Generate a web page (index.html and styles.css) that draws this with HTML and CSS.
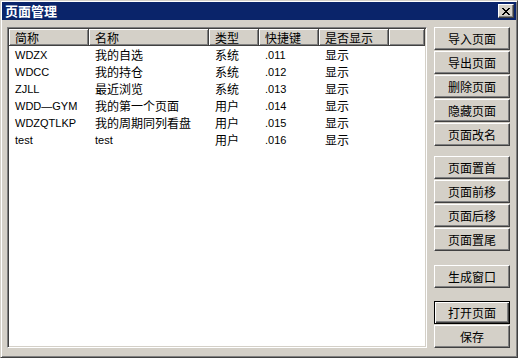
FILE: index.html
```html
<!DOCTYPE html>
<html lang="zh-CN">
<head>
  <meta charset="UTF-8">
  <title>页面管理</title>
  <link rel="stylesheet" href="styles.css">
</head>
<body>

  <div class="window">
    <div class="titlebar">
      <span class="title">页面管理</span>
      <button class="close-btn">
        <svg width="8" height="7" viewBox="0 0 8 7">
          <path d="M0 0h2v1h-2zM6 0h2v1h-2zM1 1h2v1h-2zM5 1h2v1h-2zM2 2h4v1h-4zM3 3h2v1h-2zM2 4h4v1h-4zM1 5h2v1h-2zM5 5h2v1h-2zM0 6h2v1h-2zM6 6h2v1h-2z" fill="#000"/>
        </svg>
      </button>
    </div>

    <div class="body">
      <div class="list">
        <div class="list-head">
          <div class="col c1 cn">简称</div>
          <div class="col c2 cn">名称</div>
          <div class="col c3 cn">类型</div>
          <div class="col c4 cn">快捷键</div>
          <div class="col c5 cn">是否显示</div>
          <div class="col c6"></div>
        </div>
        <div class="row">
          <div class="cell c1">WDZX</div><div class="cell c2 cn">我的自选</div><div class="cell c3 cn">系统</div><div class="cell c4">.011</div><div class="cell c5 cn">显示</div>
        </div>
        <div class="row">
          <div class="cell c1">WDCC</div><div class="cell c2 cn">我的持仓</div><div class="cell c3 cn">系统</div><div class="cell c4">.012</div><div class="cell c5 cn">显示</div>
        </div>
        <div class="row">
          <div class="cell c1">ZJLL</div><div class="cell c2 cn">最近浏览</div><div class="cell c3 cn">系统</div><div class="cell c4">.013</div><div class="cell c5 cn">显示</div>
        </div>
        <div class="row">
          <div class="cell c1">WDD—GYM</div><div class="cell c2 cn">我的第一个页面</div><div class="cell c3 cn">用户</div><div class="cell c4">.014</div><div class="cell c5 cn">显示</div>
        </div>
        <div class="row">
          <div class="cell c1">WDZQTLKP</div><div class="cell c2 cn">我的周期同列看盘</div><div class="cell c3 cn">用户</div><div class="cell c4">.015</div><div class="cell c5 cn">显示</div>
        </div>
        <div class="row">
          <div class="cell c1">test</div><div class="cell c2">test</div><div class="cell c3 cn">用户</div><div class="cell c4">.016</div><div class="cell c5 cn">显示</div>
        </div>
      </div>

      <div class="buttons">
        <div class="btn-group">
          <button class="btn">导入页面</button>
          <button class="btn">导出页面</button>
          <button class="btn">删除页面</button>
          <button class="btn">隐藏页面</button>
          <button class="btn">页面改名</button>
        </div>
        <div class="btn-group">
          <button class="btn">页面置首</button>
          <button class="btn">页面前移</button>
          <button class="btn">页面后移</button>
          <button class="btn">页面置尾</button>
        </div>
        <div class="btn-group">
          <button class="btn">生成窗口</button>
        </div>
        <div class="btn-group">
          <button class="btn default">打开页面</button>
          <button class="btn">保存</button>
        </div>
      </div>
    </div>
  </div>

</body>
</html>
```

FILE: styles.css
```css
body {
  margin: 0;
  background: #d4d0c8;
  font-family: 'Liberation Sans', 'Noto Sans CJK SC', sans-serif;
  font-size: 11px;
  color: #000;
}

.window {
  box-sizing: border-box;
  width: 518px;
  height: 358px;
  padding: 1px;
  background: #d4d0c8;
  border: 1px solid;
  border-color: #d4d0c8 #404040 #404040 #d4d0c8;
  box-shadow: inset 1px 1px #fff, inset -1px -1px #808080;
  display: flex;
  flex-direction: column;
}

.titlebar {
  height: 18px;
  background: #0a246a;
  display: flex;
  align-items: center;
  justify-content: space-between;
  padding: 0 2px 0 3px;
}

.title {
  color: #fff;
  font-family: 'Noto Sans CJK SC', sans-serif;
  font-weight: bold;
  font-size: 13px;
  line-height: 18px;
}

.close-btn {
  box-sizing: border-box;
  width: 16px;
  height: 14px;
  padding: 0;
  background: #d4d0c8;
  border: 1px solid;
  border-color: #fff #404040 #404040 #fff;
  box-shadow: inset -1px -1px #808080;
  display: flex;
  align-items: center;
  justify-content: center;
}

.body {
  flex: 1;
  display: flex;
  gap: 7px;
  padding: 7px 5px 0 5px;
}

.cn {
  font-family: 'Noto Sans CJK SC', sans-serif;
  font-size: 12px;
}

/* list view */
.list {
  box-sizing: border-box;
  width: 420px;
  height: 321px;
  background: #fff;
  border: 1px solid;
  border-color: #808080 #fff #fff #808080;
  box-shadow: inset 1px 1px #404040, inset -1px -1px #d4d0c8;
  padding: 1px;
}

.list-head {
  display: flex;
  height: 17px;
}

.list-head .col {
  box-sizing: border-box;
  height: 17px;
  line-height: 17px;
  padding-left: 6px;
  background: #d4d0c8;
  border-right: 1px solid #404040;
  border-bottom: 1px solid #404040;
  box-shadow: inset 1px 1px #fff, inset -1px -1px #808080;
  white-space: nowrap;
  overflow: hidden;
}

.list-head .col.c6 {
  flex: 1;
}

.c1 { width: 80px; }
.c2 { width: 120px; }
.c3 { width: 50px; }
.c4 { width: 60px; }
.c5 { width: 70px; }

.row {
  display: flex;
  height: 17px;
  line-height: 18px;
}

.row .cell {
  box-sizing: border-box;
  padding-left: 6px;
  white-space: nowrap;
}

/* buttons */
.buttons {
  width: 76px;
  display: flex;
  flex-direction: column;
}

.btn-group {
  display: flex;
  flex-direction: column;
  gap: 1px;
  margin-bottom: 10px;
}

.btn-group:nth-child(2) { margin-bottom: 14px; }
.btn-group:nth-child(3) { margin-bottom: 13px; }

.btn {
  box-sizing: border-box;
  width: 76px;
  height: 23px;
  padding: 0;
  background: #d4d0c8;
  border: 1px solid;
  border-color: #fff #404040 #404040 #fff;
  box-shadow: inset -1px -1px #808080;
  font-family: 'Noto Sans CJK SC', sans-serif;
  font-size: 12px;
  color: #000;
}

.btn.default {
  border: 1px solid #000;
  box-shadow: inset 1px 1px #fff, inset -1px -1px #404040, inset -2px -2px #808080;
}
```
